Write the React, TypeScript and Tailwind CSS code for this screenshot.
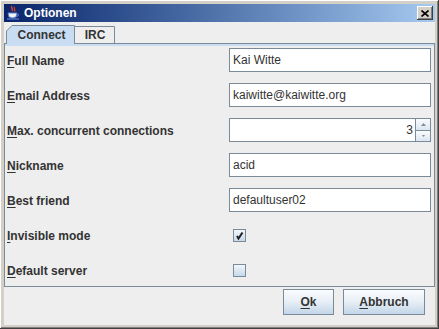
import React from "react";

function JavaIcon() {
  return (
    <svg width="16" height="16" viewBox="0 0 16 16">
      <path d="M7 1 C5 3 9 4 7 6" stroke="#e8402a" strokeWidth="1.4" fill="none" />
      <path d="M9.5 2 C8 3.5 11 4.5 9.5 6.5" stroke="#e8402a" strokeWidth="1.2" fill="none" />
      <path d="M3 8 L12 8 L11 12 Q7.5 14 4 12 Z" fill="#f2f2f2" stroke="#5b7fd6" strokeWidth="1" />
      <path d="M12 9 Q14.5 9 13 11 L11.5 11.5" stroke="#5b7fd6" strokeWidth="1" fill="none" />
      <path d="M2 14 L14 14" stroke="#5b7fd6" strokeWidth="1.2" />
    </svg>
  );
}

function Label({ m, rest }: { m: string; rest: string }) {
  return (
    <span className="font-bold text-[12px] text-[#333333] leading-none">
      <span className="underline underline-offset-[2px]">{m}</span>
      {rest}
    </span>
  );
}

function Field({ value }: { value: string }) {
  return (
    <div className="w-[202px] h-[24px] border border-[#7a8a99] bg-white flex items-center pl-[3px] text-[12px] text-[#333333]">
      {value}
    </div>
  );
}

function Spinner() {
  return (
    <div className="w-[202px] h-[24px] border border-[#7a8a99] bg-white flex">
      <div className="flex-1 flex items-center justify-end pr-[2px] text-[12px] text-[#333333]">3</div>
      <div className="w-[15px] flex flex-col border-l border-[#7a8a99]">
        <div className="flex-1 flex items-center justify-center bg-gradient-to-b from-[#fafcfe] to-[#dbe6f1] border-b border-[#7a8a99]">
          <svg width="5" height="3" viewBox="0 0 5 3"><path d="M0 3 L2.5 0 L5 3 Z" fill="#8a8a8a" /></svg>
        </div>
        <div className="flex-1 flex items-center justify-center bg-gradient-to-b from-[#fafcfe] to-[#dbe6f1]">
          <svg width="3" height="2" viewBox="0 0 3 2"><path d="M0 0 L1.5 2 L3 0 Z" fill="#8a8a8a" /></svg>
        </div>
      </div>
    </div>
  );
}

function Check({ checked }: { checked: boolean }) {
  return (
    <div className="ml-[4px] w-[13px] h-[13px] border border-[#7a8a99] bg-gradient-to-b from-[#f2f6fa] to-[#c7d8ea] flex items-center justify-center">
      {checked && (
        <svg width="9" height="9" viewBox="0 0 9 9">
          <path d="M2 5 L3.5 7.5 L7.5 1.5" stroke="#1f1f1f" strokeWidth="2" fill="none" />
        </svg>
      )}
    </div>
  );
}

function Row({ m, rest, children }: { m: string; rest: string; children: React.ReactNode }) {
  return (
    <div className="h-[24px] flex items-center">
      <div className="w-[224px] pl-[2px]">
        <Label m={m} rest={rest} />
      </div>
      {children}
    </div>
  );
}

function Button({ m, rest, w }: { m: string; rest: string; w: string }) {
  return (
    <div
      className={`${w} h-[26px] border border-[#7a8a99] bg-gradient-to-b from-[#fbfcfe] via-[#e6eef6] to-[#c3d6e9] flex items-center justify-center font-bold text-[12px] text-[#333333]`}
    >
      <span className="underline underline-offset-[2px]">{m}</span>
      {rest}
    </div>
  );
}

export default function App() {
  return (
    <div
      className="w-[439px] h-[329px] bg-[#d4d0c8] p-[4px] flex flex-col shadow-[inset_-1px_-1px_#404040,inset_1px_1px_#ffffff,inset_-2px_-2px_#808080]"
      style={{ fontFamily: "'Liberation Sans', Arial, sans-serif" }}
    >
      <div className="h-[18px] bg-gradient-to-r from-[#0a246a] to-[#a6caf0] flex items-center pl-[1px] pr-[2px]">
        <JavaIcon />
        <span className="ml-[3px] text-white font-bold text-[12px]">Optionen</span>
        <div className="flex-1" />
        <div className="w-[16px] h-[14px] bg-[#d4d0c8] shadow-[inset_-1px_-1px_#404040,inset_1px_1px_#ffffff,inset_-2px_-2px_#808080] flex items-center justify-center">
          <svg width="8" height="7" viewBox="0 0 8 7">
            <path d="M0.5 0.5 L7.5 6.5 M7.5 0.5 L0.5 6.5" stroke="#000" strokeWidth="1.6" />
          </svg>
        </div>
      </div>
      <div className="flex-1 bg-[#eeeeee] flex flex-col">
        <div className="h-[21px] flex items-end pl-[2px]">
          <div className="relative w-[69px] h-[19px] flex items-center justify-center pt-[1px] z-10 -mb-[1px]">
            <svg className="absolute inset-0" width="69" height="19" viewBox="0 0 69 19">
              <path d="M0.5 19 L0.5 6 L6 0.5 L68.5 0.5 L68.5 19" fill="#c8ddf2" stroke="#7a8a99" strokeWidth="1" />
            </svg>
            <span className="relative font-bold text-[12px] text-[#333333] pl-[2px]">Connect</span>
          </div>
          <div className="relative w-[40px] h-[17px] flex items-center justify-center">
            <svg className="absolute inset-0" width="40" height="17" viewBox="0 0 40 17">
              <path d="M0 0.5 L39.5 0.5 L39.5 17" fill="#eeeeee" stroke="#7a8a99" strokeWidth="1" />
            </svg>
            <span className="relative font-bold text-[12px] text-[#333333]">IRC</span>
          </div>
        </div>
        <div className="h-[244px] border border-[#7a8a99] flex flex-col">
          <div className="h-[2px] bg-[#c8ddf2]" />
          <div className="flex-1 flex flex-col gap-[11px] pt-[2px]">
            <Row m="F" rest="ull Name"><Field value="Kai Witte" /></Row>
            <Row m="E" rest="mail Address"><Field value="kaiwitte@kaiwitte.org" /></Row>
            <Row m="M" rest="ax. concurrent connections"><Spinner /></Row>
            <Row m="N" rest="ickname"><Field value="acid" /></Row>
            <Row m="B" rest="est friend"><Field value="defaultuser02" /></Row>
            <Row m="I" rest="nvisible mode"><Check checked={true} /></Row>
            <Row m="D" rest="efault server"><Check checked={false} /></Row>
          </div>
        </div>
        <div className="flex justify-end gap-[9px] pr-[10px] pt-[2px]">
          <Button m="O" rest="k" w="w-[51px]" />
          <Button m="A" rest="bbruch" w="w-[82px]" />
        </div>
      </div>
    </div>
  );
}
